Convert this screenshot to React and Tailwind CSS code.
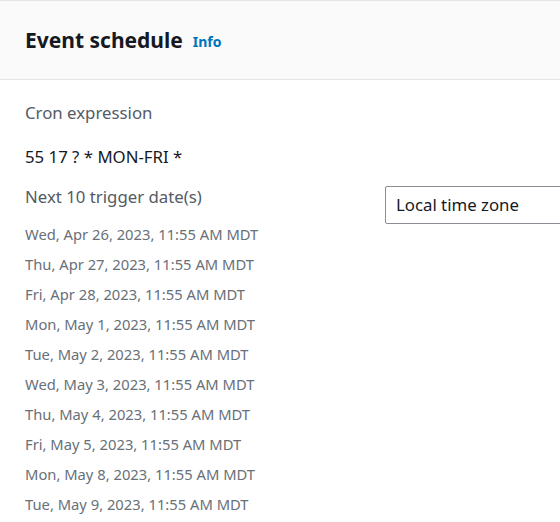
const dates = [
  'Wed, Apr 26, 2023, 11:55 AM MDT',
  'Thu, Apr 27, 2023, 11:55 AM MDT',
  'Fri, Apr 28, 2023, 11:55 AM MDT',
  'Mon, May 1, 2023, 11:55 AM MDT',
  'Tue, May 2, 2023, 11:55 AM MDT',
  'Wed, May 3, 2023, 11:55 AM MDT',
  'Thu, May 4, 2023, 11:55 AM MDT',
  'Fri, May 5, 2023, 11:55 AM MDT',
  'Mon, May 8, 2023, 11:55 AM MDT',
  'Tue, May 9, 2023, 11:55 AM MDT',
];

// Event schedule panel
const App = () => {
  return (
    <div className="w-[560px] h-[522px] overflow-hidden bg-white font-['Noto_Sans',sans-serif]">
      <div className="h-[80px] bg-[#fafafa] border-t border-b border-[#e5e5e5] flex items-center px-[25px]">
        <h2 className="text-[21px] font-bold text-[#16191f] leading-[28px]">Event schedule</h2>
        <span className="ml-[10px] mt-[3px] text-[14px] font-bold text-[#0073bb]">Info</span>
      </div>

      <div className="px-[25px] pt-[22px]">
        <div className="text-[16.8px] leading-[22px] text-[#545b64]">Cron expression</div>
        <div className="mt-[22px] text-[16.8px] leading-[22px] text-[#16191f]">55 17 ? * MON-FRI *</div>

        <div className="mt-[18px] flex items-start">
          <div className="w-[360px] shrink-0">
            <div className="text-[16.8px] leading-[22px] text-[#545b64]">Next 10 trigger date(s)</div>
            <ul className="mt-[11px]">
              {dates.map((d) => (
                <li key={d} className="text-[14.75px] leading-[30px] text-[#687078]">{d}</li>
              ))}
            </ul>
          </div>
          <div className="w-[220px] shrink-0 h-[38px] border border-[#8c8c94] rounded-[2px] flex items-center px-[10px] text-[16.8px] text-[#16191f]">
            Local time zone
          </div>
        </div>
      </div>
    </div>
  );
};

export default App;
